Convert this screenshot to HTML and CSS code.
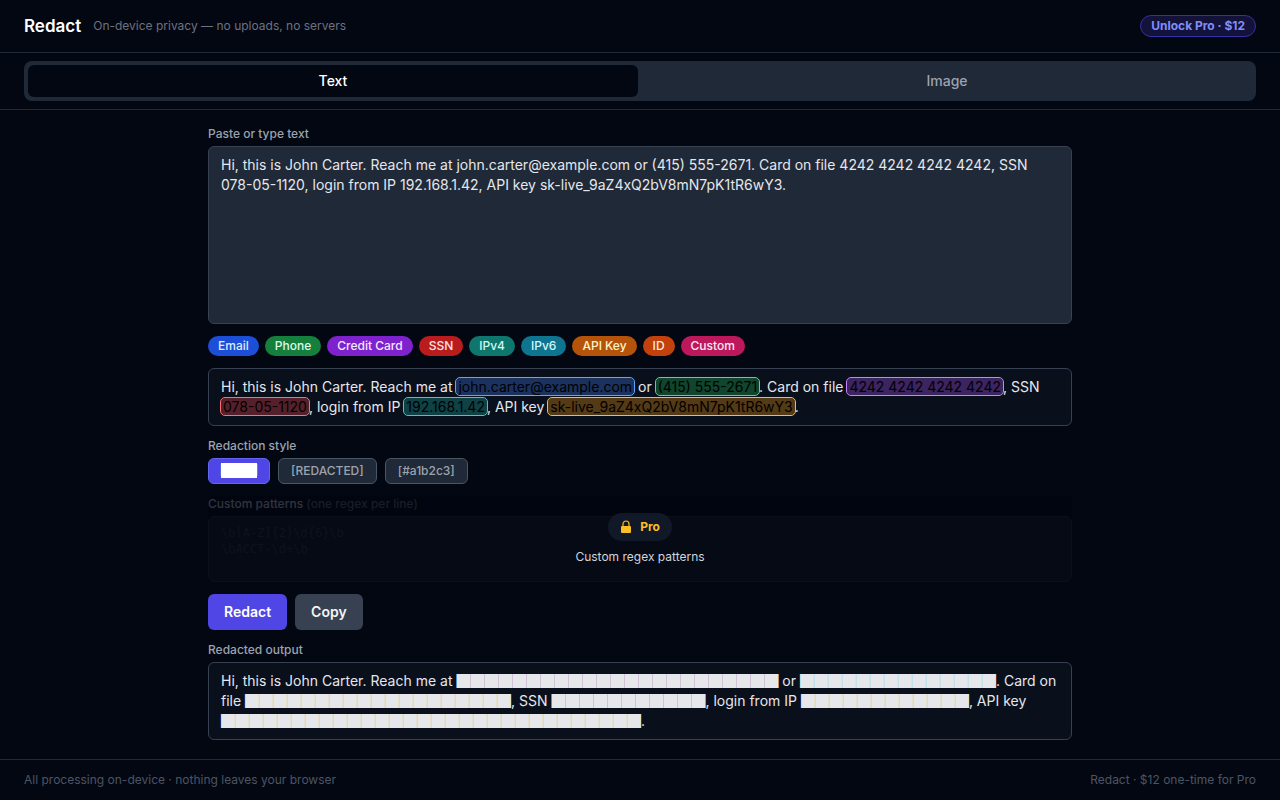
FILE: index.html
```html
<!DOCTYPE html>
<html lang="en">
<head>
    <meta charset="UTF-8">
    <meta name="viewport" content="width=device-width, initial-scale=1.0">
    <title>Redact</title>
    <link rel="stylesheet" href="styles.css">
</head>
<body>
    <header class="header">
        <div class="brand">
            <h1>Redact</h1>
            <span class="tagline">On-device privacy — no uploads, no servers</span>
        </div>
        <button type="button" class="unlock-btn">Unlock Pro · $12</button>
    </header>

    <nav class="tab-bar">
        <div class="tabs">
            <button type="button" class="tab active">Text</button>
            <button type="button" class="tab">Image</button>
        </div>
    </nav>

    <main class="content">
        <div class="field">
            <label for="inputText">Paste or type text</label>
            <textarea id="inputText" class="box" rows="8" spellcheck="false">Hi, this is John Carter. Reach me at john.carter@example.com or (415) 555-2671. Card on file 4242 4242 4242 4242, SSN 078-05-1120, login from IP 192.168.1.42, API key sk-live_9aZ4xQ2bV8mN7pK1tR6wY3.</textarea>
        </div>

        <!-- Entity types -->
        <div class="chips">
            <button type="button" class="chip chip-email">Email</button>
            <button type="button" class="chip chip-phone">Phone</button>
            <button type="button" class="chip chip-card">Credit Card</button>
            <button type="button" class="chip chip-ssn">SSN</button>
            <button type="button" class="chip chip-ipv4">IPv4</button>
            <button type="button" class="chip chip-ipv6">IPv6</button>
            <button type="button" class="chip chip-key">API Key</button>
            <button type="button" class="chip chip-id">ID</button>
            <button type="button" class="chip chip-custom">Custom</button>
        </div>

        <!-- Highlighted preview -->
        <div class="box">Hi, this is John Carter. Reach me at <mark class="hl-email">john.carter@example.com</mark> or <mark class="hl-phone">(415) 555-2671</mark>. Card on file <mark class="hl-card">4242 4242 4242 4242</mark>, SSN <mark class="hl-ssn">078-05-1120</mark>, login from IP <mark class="hl-ipv4">192.168.1.42</mark>, API key <mark class="hl-key">sk-live_9aZ4xQ2bV8mN7pK1tR6wY3</mark>.</div>

        <div class="field">
            <span class="label">Redaction style</span>
            <div class="styles">
                <button type="button" class="style-btn active"><span class="bar">███</span></button>
                <button type="button" class="style-btn">[REDACTED]</button>
                <button type="button" class="style-btn">[#a1b2c3]</button>
            </div>
        </div>

        <!-- Pro only -->
        <div class="pro-section">
            <div class="field locked">
                <label for="patterns">Custom patterns <span class="hint">(one regex per line)</span></label>
                <textarea id="patterns" class="box patterns" rows="3" placeholder="\b[A-Z]{2}\d{6}\b&#10;\bACCT-\d+\b" disabled></textarea>
            </div>
            <div class="pro-overlay">
                <button type="button" class="pro-badge">
                    <svg width="12" height="14" viewBox="0 0 12 14" aria-hidden="true">
                        <path d="M3 7V4a3 3 0 0 1 6 0v3" fill="none" stroke="currentColor" stroke-width="1.2"/>
                        <rect x="1" y="6" width="10" height="7" rx="1" fill="currentColor"/>
                    </svg>
                    Pro
                </button>
                <p>Custom regex patterns</p>
            </div>
        </div>

        <div class="actions">
            <button type="button" class="btn btn-primary">Redact</button>
            <button type="button" class="btn">Copy</button>
        </div>

        <div class="field">
            <label for="result">Redacted output</label>
            <output id="result" class="box">Hi, this is John Carter. Reach me at ███████████████████████ or ██████████████. Card on file ███████████████████, SSN ███████████, login from IP ████████████, API key ██████████████████████████████.</output>
        </div>
    </main>

    <footer class="footer">
        <span>All processing on-device · nothing leaves your browser</span>
        <span>Redact · $12 one-time for Pro</span>
    </footer>
</body>
</html>
```
FILE: styles.css
```css
* {
    margin: 0;
    padding: 0;
    box-sizing: border-box;
}

body {
    display: flex;
    flex-direction: column;
    min-height: 100vh;
    background: #030712;
    color: #e5e7eb;
    font-family: Inter, "Noto Sans CJK JP", sans-serif;
    font-size: 14px;
    line-height: 20px;
}

button, textarea {
    font: inherit;
    color: inherit;
}

button {
    border: none;
    cursor: pointer;
}

.header {
    display: flex;
    align-items: center;
    justify-content: space-between;
    padding: 12px 24px;
    border-bottom: 1px solid #1f2937;
}

.brand {
    display: flex;
    align-items: center;
    gap: 12px;
}

.brand h1 {
    color: white;
    font-size: 17px;
    font-weight: 600;
    line-height: 28px;
}

.tagline {
    color: #6b7280;
    font-size: 12px;
    line-height: 16px;
}

.unlock-btn {
    padding: 2px 10px;
    background: #13123a;
    border: 1px solid #3730a3;
    border-radius: 999px;
    color: #818cf8;
    font-size: 12px;
    font-weight: 700;
    line-height: 16px;
}

.tab-bar {
    padding: 8px 24px;
    border-bottom: 1px solid #1f2937;
}

.tabs {
    display: flex;
    gap: 4px;
    padding: 4px;
    background: #1f2937;
    border-radius: 8px;
}

.tab {
    flex: 1;
    padding: 6px 16px;
    background: transparent;
    border-radius: 6px;
    color: #9ca3af;
    font-weight: 500;
}

.tab.active {
    background: #030712;
    color: white;
}

.content {
    display: flex;
    flex: 1;
    flex-direction: column;
    gap: 12px;
    width: 100%;
    max-width: 896px;
    margin: 0 auto;
    padding: 16px;
}

.field {
    display: flex;
    flex-direction: column;
    gap: 4px;
}

.field label, .label {
    color: #9ca3af;
    font-size: 12px;
    font-weight: 500;
    line-height: 16px;
}

.field .hint {
    color: #4b5563;
}

.box {
    display: block;
    width: 100%;
    padding: 8px 12px;
    background: #0a0f1c;
    border: 1px solid #374151;
    border-radius: 6px;
    overflow-wrap: break-word;
}

textarea.box {
    background: #1f2937;
    resize: none;
}

.chips {
    display: flex;
    flex-wrap: wrap;
    gap: 6px;
}

.chip {
    padding: 2px 10px;
    border-radius: 999px;
    font-size: 12px;
    font-weight: 500;
    line-height: 16px;
}

.chip-email { background: #1d4ed8; color: #dbeafe; }
.chip-phone { background: #15803d; color: #dcfce7; }
.chip-card { background: #7e22ce; color: #f3e8ff; }
.chip-ssn { background: #b91c1c; color: #fee2e2; }
.chip-ipv4 { background: #0f766e; color: #ccfbf1; }
.chip-ipv6 { background: #0e7490; color: #cffafe; }
.chip-key { background: #b45309; color: #fef3c7; }
.chip-id { background: #c2410c; color: #ffedd5; }
.chip-custom { background: #be185d; color: #fce7f3; }

mark {
    padding: 0 2px;
    border-radius: 4px;
    outline: 1px solid;
    color: black;
}

.hl-email { background: #1b325f; outline-color: #60a5fa; }
.hl-phone { background: #10452e; outline-color: #4ade80; }
.hl-card { background: #3b245f; outline-color: #c084fc; }
.hl-ssn { background: #55202b; outline-color: #f87171; }
.hl-ipv4 { background: #0e4247; outline-color: #2dd4bf; }
.hl-key { background: #543a15; outline-color: #fbbf24; }

.styles, .actions {
    display: flex;
    gap: 8px;
}

.style-btn {
    padding: 4px 12px;
    background: #1f2937;
    border: 1px solid #4b5563;
    border-radius: 6px;
    color: #9ca3af;
    font-size: 12px;
    font-weight: 500;
    line-height: 16px;
}

.style-btn.active {
    background: #4f46e5;
    border-color: #6366f1;
    color: white;
}

.bar {
    background: currentColor;
}

.pro-section {
    position: relative;
}

textarea.patterns {
    background: #111827;
    border-color: #1f2937;
    font-family: "DejaVu Sans Mono", monospace;
    font-size: 12px;
    line-height: 16px;
}

.patterns::placeholder {
    color: #2b3442;
}

.pro-overlay {
    position: absolute;
    inset: 0;
    display: flex;
    flex-direction: column;
    align-items: center;
    justify-content: center;
    gap: 8px;
    background: rgba(2, 4, 14, 0.7);
    font-size: 12px;
    line-height: 16px;
    color: #d1d5db;
}

.pro-badge {
    display: flex;
    align-items: center;
    gap: 8px;
    padding: 6px 12px;
    background: #111827;
    border-radius: 999px;
    color: #fbbf24;
    font-weight: 700;
}

.btn {
    padding: 8px 16px;
    background: #374151;
    border-radius: 6px;
    color: #f3f4f6;
    font-weight: 600;
}

.btn-primary {
    background: #4f46e5;
    color: white;
}

.footer {
    display: flex;
    justify-content: space-between;
    padding: 12px 24px;
    border-top: 1px solid #1f2937;
    color: #4b5563;
    font-size: 12px;
    line-height: 16px;
}
```
